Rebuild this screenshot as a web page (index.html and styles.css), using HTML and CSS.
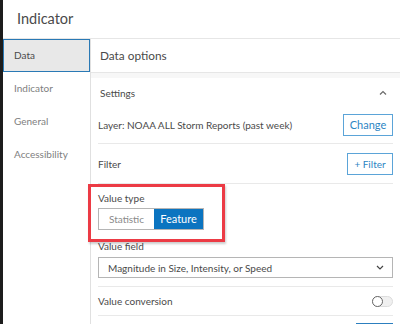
FILE: index.html
```html
<!DOCTYPE html>
<html>
<head>
<meta charset="utf-8">
<link rel="stylesheet" href="styles.css">
</head>
<body>
<div class="app">
  <div class="title">Indicator</div>
  <div class="main">
    <nav class="nav">
      <div class="nav-item active">Data</div>
      <div class="nav-item">Indicator</div>
      <div class="nav-item">General</div>
      <div class="nav-item">Accessibility</div>
    </nav>
    <section class="content">
      <div class="content-header">Data options</div>
      <div class="strip"></div>
      <div class="section-header">
        <span>Settings</span>
        <svg class="chev" width="8" height="5" viewBox="0 0 8 5"><path d="M1 4.5 L4 1.5 L7 4.5" fill="none" stroke="#6a6a6a" stroke-width="1.2"/></svg>
      </div>
      <div class="section-body">
        <div class="row row-layer">
          <span>Layer: NOAA ALL Storm Reports (past week)</span>
          <button class="btn btn-change">Change</button>
        </div>
        <div class="row row-filter">
          <span>Filter</span>
          <button class="btn btn-filter">+ Filter</button>
        </div>
        <div class="field field-type">
          <div class="label">Value type</div>
          <div class="segmented">
            <div class="seg">Statistic</div>
            <div class="seg on">Feature</div>
          </div>
        </div>
        <div class="field field-value">
          <div class="label">Value field</div>
          <div class="select">
            <span>Magnitude in Size, Intensity, or Speed</span>
            <svg width="8" height="5" viewBox="0 0 8 5"><path d="M1 1 L4 4 L7 1" fill="none" stroke="#444" stroke-width="1.2"/></svg>
          </div>
        </div>
        <div class="row row-conv">
          <span>Value conversion</span>
          <div class="toggle"><div class="knob"></div></div>
        </div>
        <div class="bottom-btn"></div>
      </div>
    </section>
  </div>
</div>
</body>
</html>
```
FILE: styles.css
```css
* { box-sizing: border-box; }
html, body { margin: 0; padding: 0; background: #fff; }
body { font-family: "Lato", "Open Sans", sans-serif; color: #4a4a4a; width: 400px; height: 324px; overflow: hidden; }
.app { height: 324px; border-left: 3px solid #1c1c1c; display: flex; flex-direction: column; }
.title { height: 39px; padding-left: 14px; font-size: 14.5px; line-height: 37px; color: #4a4a4a; border-bottom: 1px solid #e6e6e6; flex: none; }
.main { flex: 1; display: flex; min-height: 0; }
.nav { width: 88px; border-right: 1px solid #e0e0e0; flex: none; }
.nav-item { height: 33px; padding-left: 11px; font-size: 10px; line-height: 33px; color: #808080; }
.nav-item.active { background: #e8e8e8; border: 1px solid #2a79b5; padding-left: 10px; line-height: 31px; color: #4a4a4a; }
.content { flex: 1; display: flex; flex-direction: column; }
.content-header { height: 34px; padding-left: 9px; font-size: 11.8px; line-height: 33px; border-bottom: 1px solid #e6e6e6; flex: none; }
.strip { height: 5px; background: #f7f7f7; flex: none; }
.section-header { height: 29px; display: flex; align-items: center; justify-content: space-between; padding: 0 13px 0 9px; font-size: 10px; flex: none; }
.section-body { padding: 0 7px; }
.row { display: flex; align-items: center; justify-content: space-between; font-size: 10px; border-bottom: 1px solid #e9e9e9; }
.row-layer { height: 37px; }
.row-filter { height: 40px; }
.btn { font-family: inherit; font-size: 11px; color: #2d85c3; background: #fff; border: 1px solid #5ba4d8; height: 22px; padding: 0; line-height: 20px; text-align: center; }
.btn-change { width: 50px; }
.btn-filter { width: 46px; font-size: 10px; }
.field .label { font-size: 10px; line-height: 16px; }
.field-type { position: relative; padding-top: 6px; height: 53px; }
.field-type::after { content: ""; position: absolute; left: -10px; top: 0; width: 131px; height: 52px; border: 3px solid #ec3b45; box-shadow: 1px 2px 2px rgba(0,0,0,0.2); pointer-events: none; }
.segmented { margin-top: 2px; display: flex; width: 106px; height: 22px; border: 1px solid #b5b5b5; }
.seg { width: 55px; font-size: 10px; line-height: 20px; text-align: center; color: #8a8a8a; }
.seg.on { width: 49px; background: #0b74c0; color: #fff; font-size: 11px; }
.field-value { padding-top: 2px; height: 50px; border-bottom: 1px solid #e9e9e9; }
.field-value .label { line-height: 15px; }
.select { margin-top: 3px; height: 21px; border: 1px solid #b5b5b5; display: flex; align-items: center; justify-content: space-between; padding: 0 8px 0 9px; font-size: 10px; }
.row-conv { height: 29px; }
.toggle { width: 21px; height: 11px; border-radius: 6px; background: #f0f0f0; border: 1px solid #dcdcdc; position: relative; }
.knob { position: absolute; left: -1px; top: -1px; width: 11px; height: 11px; border-radius: 50%; border: 1px solid #666; background: #fff; }
.bottom-btn { margin: 7px 0 0 auto; width: 37px; height: 6px; background: #2c7fbf; }
```
